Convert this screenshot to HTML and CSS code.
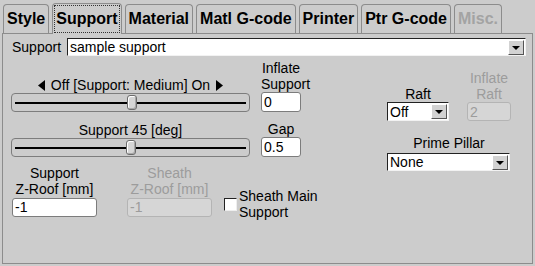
FILE: index.html
```html
<!DOCTYPE html>
<html lang="en">
<head>
    <meta charset="UTF-8">
    <title>Support settings</title>
    <link rel="stylesheet" href="styles.css">
</head>
<body>

<div class="tabs">
    <div class="tab">Style</div>
    <div class="tab active"><span class="focus">Support</span></div>
    <div class="tab">Material</div>
    <div class="tab">Matl G-code</div>
    <div class="tab">Printer</div>
    <div class="tab">Ptr G-code</div>
    <div class="tab disabled">Misc.</div>
</div>

<div class="panel">
    <div class="support-row">
        <span class="label">Support</span>
        <div class="combo wide">
            <span class="combo-text">sample support</span>
            <span class="drop-btn"></span>
        </div>
    </div>

    <div class="main">
        <div class="left">
            <!-- overall support amount -->
            <div class="row">
                <div class="slider-group">
                    <div class="caption">
                        <svg class="arrow" width="7" height="11" viewBox="0 0 7 11"><polygon points="7,0 7,11 0,5.5" fill="#000"/></svg>
                        Off [Support: Medium] On
                        <svg class="arrow" width="7" height="11" viewBox="0 0 7 11"><polygon points="0,0 0,11 7,5.5" fill="#000"/></svg>
                    </div>
                    <div class="slider">
                        <div class="track"></div>
                        <div class="thumb" style="left: 48.5%"></div>
                    </div>
                </div>
                <div class="field small">
                    <div class="caption">Inflate<br>Support</div>
                    <div class="input">0</div>
                </div>
            </div>

            <!-- overhang angle -->
            <div class="row row-b">
                <div class="slider-group">
                    <div class="caption">Support 45 [deg]</div>
                    <div class="slider">
                        <div class="track"></div>
                        <div class="thumb" style="left: 48%"></div>
                    </div>
                </div>
                <div class="field small">
                    <div class="caption">Gap</div>
                    <div class="input">0.5</div>
                </div>
            </div>

            <!-- roofs -->
            <div class="row row-c">
                <div class="field roof">
                    <div class="caption">Support<br>Z-Roof [mm]</div>
                    <div class="input tall">-1</div>
                </div>
                <div class="field roof disabled">
                    <div class="caption">Sheath<br>Z-Roof [mm]</div>
                    <div class="input tall">-1</div>
                </div>
                <div class="check">
                    <span class="box"></span>
                    <span class="check-text">Sheath Main<br>Support</span>
                </div>
            </div>
        </div>

        <div class="right">
            <div class="raft-row">
                <div class="field">
                    <div class="caption">Raft</div>
                    <div class="combo raft">
                        <span class="combo-text">Off</span>
                        <span class="drop-btn"></span>
                    </div>
                </div>
                <div class="field inflate-raft disabled">
                    <div class="caption">Inflate<br>Raft</div>
                    <div class="input">2</div>
                </div>
            </div>
            <div class="field prime">
                <div class="caption">Prime Pillar</div>
                <div class="combo pillar">
                    <span class="combo-text">None</span>
                    <span class="drop-btn"></span>
                </div>
            </div>
        </div>
    </div>
</div>

</body>
</html>
```

FILE: styles.css
```css
* {
    box-sizing: border-box;
}
body {
    margin: 0;
    width: 535px;
    height: 266px;
    overflow: hidden;
    background-color: #cccccc;
    color: #000;
    font-family: "Liberation Sans", Arial, sans-serif;
    font-size: 14px;
    line-height: 16px;
}

/* tab strip */
.tabs {
    display: flex;
    align-items: flex-end;
    gap: 3px;
    height: 33px;
    padding-left: 3px;
}
.tab {
    height: 29px;
    padding: 0 3px;
    border: 1px solid #8c8c8c;
    border-bottom: none;
    border-radius: 4px 4px 0 0;
    font-size: 16px;
    font-weight: bold;
    line-height: 28px;
}
.tab.active {
    position: relative;
    z-index: 1;
    height: 31px;
    margin-bottom: -1px;
    padding: 1px 1px 0;
    background-color: #cccccc;
}
.tab.active .focus {
    display: block;
    height: 28px;
    padding: 0 1px;
    border: 1px dotted #333;
    line-height: 26px;
}
.tab.disabled {
    color: #a3a3a3;
}

/* panel */
.panel {
    width: 531px;
    height: 231px;
    margin-left: 2px;
    padding: 4px 6px 0 8px;
    border: 1px solid #8c8c8c;
}
.support-row {
    display: flex;
    align-items: center;
    gap: 6px;
    height: 18px;
}
.label {
    padding-left: 1px;
}

/* combo boxes */
.combo {
    display: flex;
    align-items: center;
    height: 18px;
    background-color: #fff;
    border: 1px solid;
    border-color: #222 #f2f2f2 #f2f2f2 #222;
}
.combo.wide {
    flex: 1;
}
.combo-text {
    flex: 1;
    padding-left: 2px;
    white-space: nowrap;
}
.drop-btn {
    position: relative;
    width: 16px;
    height: 15px;
    margin-right: 1px;
    background-color: #d2d2d2;
    border: 1px solid;
    border-color: #fff #555 #555 #fff;
}
.drop-btn::after {
    content: "";
    position: absolute;
    left: 3px;
    top: 5px;
    border-left: 4px solid transparent;
    border-right: 4px solid transparent;
    border-top: 4px solid #000;
}
.combo.raft {
    width: 62px;
    height: 19px;
}
.combo.pillar {
    width: 123px;
    margin-top: 2px;
}

.main {
    display: flex;
    margin-top: 4px;
}
.left {
    width: 307px;
}
.row {
    display: flex;
    align-items: flex-end;
    gap: 11px;
}
.row-b {
    margin-top: 9px;
}
.row-c {
    align-items: flex-start;
    gap: 0;
    margin-top: 8px;
}

/* sliders */
.slider-group {
    width: 239px;
}
.caption {
    text-align: center;
    white-space: nowrap;
}
.arrow {
    margin: 0 2px;
    vertical-align: -1px;
}
.slider {
    position: relative;
    display: flex;
    align-items: center;
    height: 19px;
    border: 1px solid #7d7d7d;
    border-radius: 4px;
}
.track {
    flex: 1;
    height: 2px;
    margin: 0 3px;
    background-color: #000;
}
.thumb {
    position: absolute;
    top: 1px;
    width: 10px;
    height: 15px;
    background-color: #d6d6d6;
    border: 1px solid #6c6c6c;
    border-radius: 3px;
    box-shadow: inset 1px 1px #fff, inset -1px -1px #a8a8a8;
}

/* text fields */
.field {
    display: flex;
    flex-direction: column;
}
.input {
    height: 20px;
    padding-left: 2px;
    background-color: #fff;
    border: 1px solid #7c7c7c;
    border-radius: 3px;
    line-height: 18px;
}
.input.tall {
    height: 19px;
    margin-top: 1px;
    line-height: 17px;
}
.field.small {
    width: 40px;
}
.field.roof {
    width: 85px;
    margin-left: 1px;
}
.field.roof + .field.roof {
    margin-left: 30px;
}
.field.disabled {
    color: #9c9c9c;
}
.field.disabled .input {
    background-color: #d6d6d6;
    border-color: #b4b4b4;
}

/* checkbox */
.check {
    display: flex;
    align-items: center;
    gap: 2px;
    margin-top: 23px;
    margin-left: 12px;
}
.check-text {
    white-space: nowrap;
}
.box {
    width: 13px;
    height: 13px;
    background-color: #fff;
    border: 1px solid;
    border-color: #222 #eee #eee #222;
}

/* right column */
.right {
    flex: none;
    width: 124px;
    margin-top: 10px;
    margin-left: 69px;
}
.raft-row {
    display: flex;
    align-items: flex-end;
    gap: 18px;
}
.field.inflate-raft {
    width: 44px;
}
.field.inflate-raft .input {
    height: 19px;
}
.field.prime {
    margin-top: 14px;
}
```
